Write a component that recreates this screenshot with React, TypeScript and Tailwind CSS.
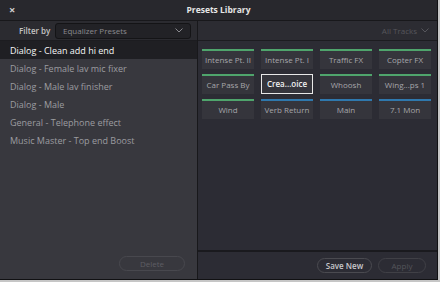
import React from "react";

const items = [
  "Dialog - Clean add hi end",
  "Dialog - Female lav mic fixer",
  "Dialog - Male lav finisher",
  "Dialog - Male",
  "General - Telephone effect",
  "Music Master - Top end Boost",
];

const tiles: { label: string; color: "g" | "b"; sel?: boolean }[] = [
  { label: "Intense Pt. II", color: "g" },
  { label: "Intense Pt. I", color: "g" },
  { label: "Traffic FX", color: "g" },
  { label: "Copter FX", color: "g" },
  { label: "Car Pass By", color: "g" },
  { label: "Crea...oice", color: "g", sel: true },
  { label: "Whoosh", color: "g" },
  { label: "Wing...ps 1", color: "g" },
  { label: "Wind", color: "g" },
  { label: "Verb Return", color: "b" },
  { label: "Main", color: "b" },
  { label: "7.1 Mon", color: "b" },
];

function Chevron({ className }: { className?: string }) {
  return (
    <svg width="8" height="5" viewBox="0 0 8 5" className={className}>
      <path d="M0.5 0.5 L4 4 L7.5 0.5" fill="none" stroke="currentColor" strokeWidth="1" />
    </svg>
  );
}

export default function App() {
  return (
    <div
      className="w-[440px] h-[282px] bg-[#c6c6c6] overflow-hidden"
      style={{ fontFamily: '"Open Sans", "Noto Sans", sans-serif' }}
    >
      <div className="w-[438px] h-[280px] flex flex-col bg-[#2c2c33] border-r border-b border-[#111113]">
        {/* Title bar */}
        <div className="h-[21px] shrink-0 relative flex items-center justify-center bg-[#28282d] border-b border-[#18181b]">
          <span className="absolute left-[9px] top-[4px] text-[11px] leading-[11px] font-bold text-[#d0d0d0]">×</span>
          <span className="text-[8.5px] font-bold text-[#e6e6e6] leading-none">Presets Library</span>
        </div>
        <div className="flex flex-1 min-h-0">
          {/* Left panel */}
          <div className="w-[198px] shrink-0 flex flex-col bg-[#38383e] border-r border-[#18181b]">
            <div className="h-[20px] shrink-0 flex items-center bg-[#2b2b30] border-b border-[#1c1c20]">
              <span className="ml-[19px] w-[29px] whitespace-nowrap text-[8px] font-semibold text-[#c4c4c4] leading-none">Filter by</span>
              <div className="ml-[7px] w-[136px] h-[16px] flex items-center justify-between rounded-[3px] bg-[#222226] border border-[#141416] pl-[7px] pr-[7px]">
                <span className="text-[8px] text-[#8a8a8f] leading-none">Equalizer Presets</span>
                <Chevron className="text-[#8a8a8f]" />
              </div>
            </div>
            <div className="flex flex-col flex-1">
              {items.map((t, i) => (
                <div
                  key={t}
                  className={
                    "h-[18px] flex items-center pl-[10px] text-[9px] leading-none whitespace-nowrap " +
                    (i === 0 ? "bg-[#1f1f23] text-[#f6f6f6]" : "text-[#9c9ca0]")
                  }
                >
                  {t}
                </div>
              ))}
            </div>
            <div className="h-[29px] shrink-0 flex items-start justify-end pr-[12px] pt-[6px]">
              <div className="w-[66px] h-[15px] rounded-full border border-[#48484e] flex items-center justify-center text-[8px] text-[#5e5e64] leading-none">
                Delete
              </div>
            </div>
          </div>
          {/* Right panel */}
          <div className="flex-1 flex flex-col bg-[#2c2c34]">
            <div className="h-[20px] shrink-0 flex items-center justify-end pr-[8px] gap-[4px] bg-[#2c2c32] border-b border-[#1c1c20]">
              <span className="text-[8px] text-[#56565c] leading-none">All Tracks</span>
              <Chevron className="text-[#56565c]" />
            </div>
            <div className="flex-1 pl-[4px] pt-[8px]">
              <div className="grid grid-cols-[52px_52px_52px_52px] gap-x-[7px] gap-y-[5px]">
                {tiles.map((t) => (
                  <div
                    key={t.label}
                    className={
                      "h-[20px] flex flex-col bg-[#35353c] " +
                      (t.sel ? "border border-[#e8e8e8]" : "")
                    }
                  >
                    {!t.sel && (
                      <div className={"h-[2px] shrink-0 " + (t.color === "g" ? "bg-[#4fa46c]" : "bg-[#2f78ad]")} />
                    )}
                    <div
                      className={
                        "flex-1 flex items-center justify-center text-[8px] leading-none whitespace-nowrap " +
                        (t.sel ? "text-[#f2f2f2] font-semibold" : "text-[#a6a6aa]")
                      }
                    >
                      {t.label}
                    </div>
                  </div>
                ))}
              </div>
            </div>
            <div className="h-[29px] shrink-0 flex items-start justify-end gap-[6px] pr-[11px] pt-[6px] border-t-2 border-[#1a1a1e]">
              <div className="w-[55px] h-[15px] rounded-full border border-[#4a4a50] flex items-center justify-center text-[8px] font-semibold text-[#c8c8cc] leading-none">
                Save New
              </div>
              <div className="w-[48px] h-[15px] rounded-full border border-[#404046] flex items-center justify-center text-[8px] text-[#54545a] leading-none">
                Apply
              </div>
            </div>
          </div>
        </div>
      </div>
    </div>
  );
}
